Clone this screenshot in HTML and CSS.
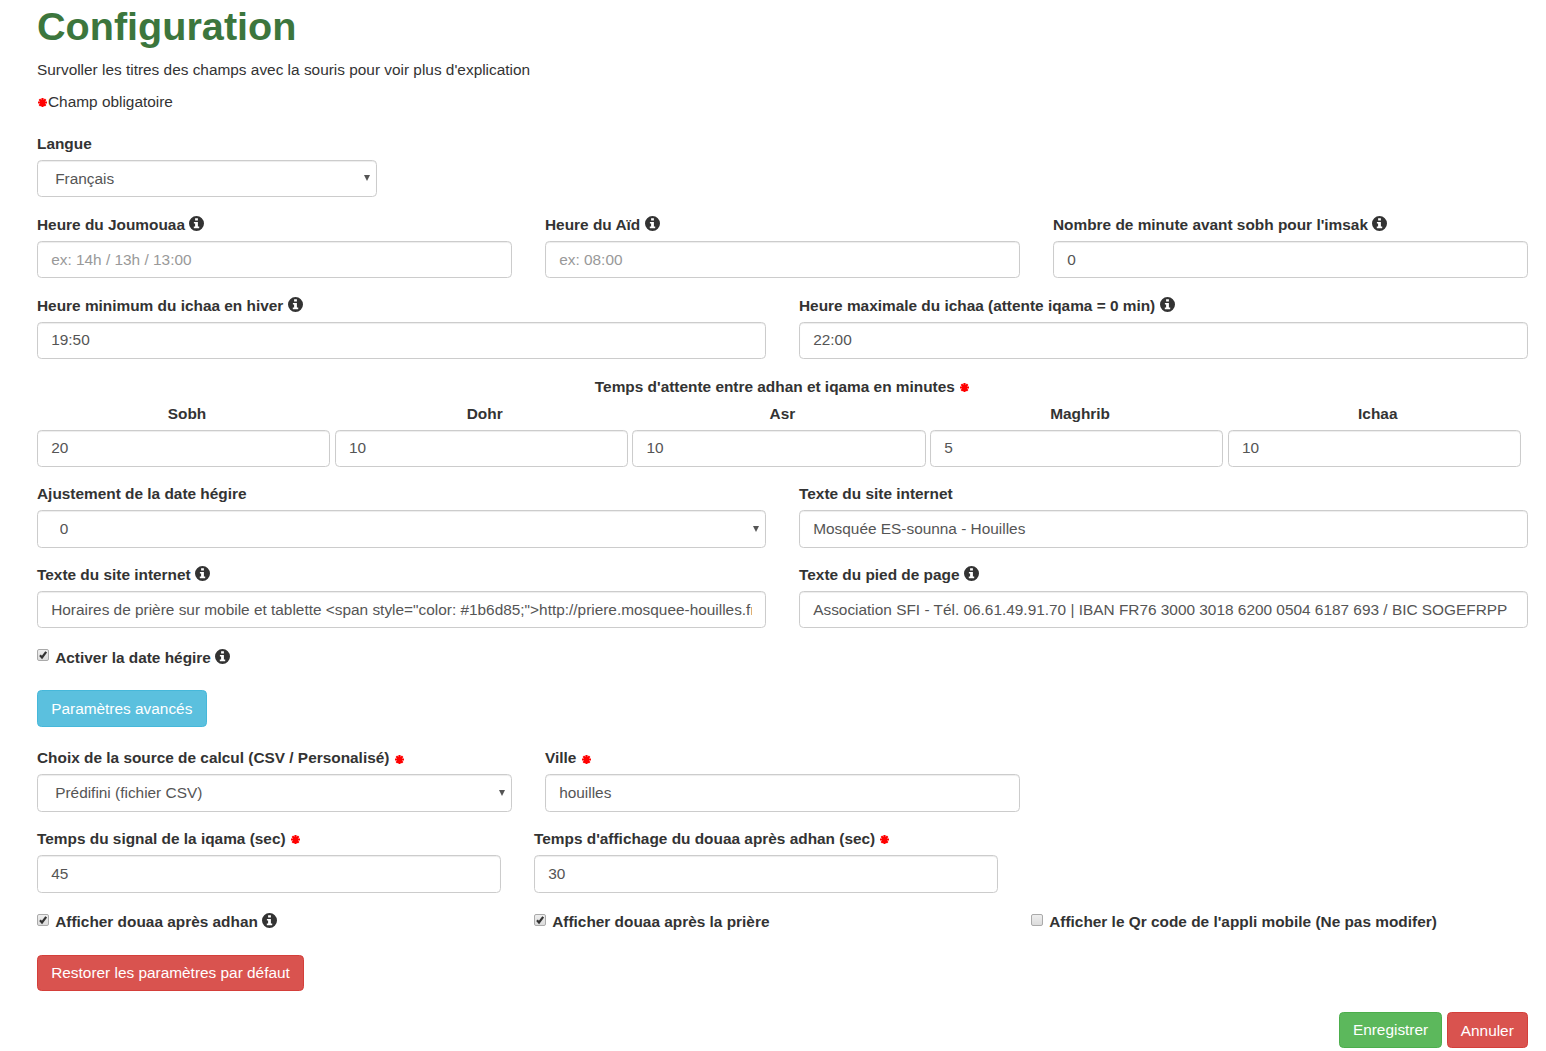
FILE: index.html
```html
<!DOCTYPE html>
<html lang="fr">
<head>
<meta charset="utf-8">
<title>Configuration</title>
<link rel="stylesheet" href="styles.css">
</head>
<body>
<svg class="defs" aria-hidden="true">
  <symbol id="info" viewBox="0 0 15 15">
    <path fill-rule="evenodd" d="M7.5 0a7.5 7.5 0 1 0 0 15a7.5 7.5 0 0 0 0-15zM6.1 2.2h2.8v2.2H6.1zM4.9 6h4v4.6h1.3v1.6H4.8v-1.6h1.3V7.6H4.9z"/>
  </symbol>
  <symbol id="star" viewBox="0 0 20 20">
    <path d="M10 0v20M0 10h20M3 3l14 14M17 3L3 17" stroke="currentColor" stroke-width="4.8"/>
  </symbol>
  <symbol id="arrow" viewBox="0 0 6 6"><path d="M0 0h6L3 6z"/></symbol>
  <symbol id="check" viewBox="0 0 12 12"><path d="M3 6.3l2 2.2 4.2-5.6" fill="none" stroke="#333" stroke-width="2.2"/></symbol>
</svg>
<main class="page">
  <h1>Configuration</h1>
  <p>Survoller les titres des champs avec la souris pour voir plus d'explication</p>
  <p class="legend"><svg class="star"><use href="#star"/></svg>Champ obligatoire</p>

  <form>
    <div class="row language">
      <div class="field">
        <label>Langue</label>
        <div class="select"><select><option>Français</option></select><svg><use href="#arrow"/></svg></div>
      </div>
    </div>

    <div class="row thirds">
      <div class="field"><label>Heure du Joumouaa <svg class="info"><use href="#info"/></svg></label><input type="text" placeholder="ex: 14h / 13h / 13:00"></div>
      <div class="field"><label>Heure du Aïd <svg class="info"><use href="#info"/></svg></label><input type="text" placeholder="ex: 08:00"></div>
      <div class="field"><label>Nombre de minute avant sobh pour l'imsak <svg class="info"><use href="#info"/></svg></label><input type="text" value="0"></div>
    </div>

    <div class="row halves">
      <div class="field"><label>Heure minimum du ichaa en hiver <svg class="info"><use href="#info"/></svg></label><input class="raised" type="text" value="19:50"></div>
      <div class="field"><label>Heure maximale du ichaa (attente iqama = 0 min) <svg class="info"><use href="#info"/></svg></label><input class="raised" type="text" value="22:00"></div>
    </div>

    <div class="waiting">
      <label>Temps d'attente entre adhan et iqama en minutes <svg class="star"><use href="#star"/></svg></label>
      <div class="prayer-names"><label>Sobh</label><label>Dohr</label><label>Asr</label><label>Maghrib</label><label>Ichaa</label></div>
      <div class="prayer-times">
        <input class="raised" type="text" value="20"><input class="raised" type="text" value="10"><input class="raised" type="text" value="10"><input class="raised" type="text" value="5"><input class="raised" type="text" value="10">
      </div>
    </div>

    <div class="row halves tall">
      <div class="field">
        <label>Ajustement de la date hégire</label>
        <div class="select number"><select><option>0</option></select><svg><use href="#arrow"/></svg></div>
      </div>
      <div class="field"><label>Texte du site internet</label><input type="text" value="Mosquée ES-sounna - Houilles"></div>
    </div>

    <div class="row halves">
      <div class="field"><label>Texte du site internet <svg class="info"><use href="#info"/></svg></label><input type="text" value="Horaires de prière sur mobile et tablette &lt;span style=&quot;color: #1b6d85;&quot;&gt;http://priere.mosquee-houilles.fr&lt;/span&gt;"></div>
      <div class="field"><label>Texte du pied de page <svg class="info"><use href="#info"/></svg></label><input type="text" value="Association SFI - Tél. 06.61.49.91.70 | IBAN FR76 3000 3018 6200 0504 6187 693 / BIC SOGEFRPP"></div>
    </div>

    <div class="option hijri">
      <span class="box"><svg><use href="#check"/></svg></span><label>Activer la date hégire <svg class="info"><use href="#info"/></svg></label>
    </div>

    <button type="button" class="btn advanced">Paramètres avancés</button>

    <div class="row thirds tall source">
      <div class="field">
        <label>Choix de la source de calcul (CSV / Personalisé) <svg class="star"><use href="#star"/></svg></label>
        <div class="select"><select><option>Prédifini (fichier CSV)</option></select><svg><use href="#arrow"/></svg></div>
      </div>
      <div class="field"><label>Ville <svg class="star"><use href="#star"/></svg></label><input type="text" value="houilles"></div>
    </div>

    <div class="row nested tall">
      <div class="field"><label>Temps du signal de la iqama (sec) <svg class="star"><use href="#star"/></svg></label><input type="text" value="45"></div>
      <div class="field"><label>Temps d'affichage du douaa après adhan (sec) <svg class="star"><use href="#star"/></svg></label><input type="text" value="30"></div>
    </div>

    <div class="nested options">
      <div class="option"><span class="box"><svg><use href="#check"/></svg></span><label>Afficher douaa après adhan <svg class="info"><use href="#info"/></svg></label></div>
      <div class="option"><span class="box"><svg><use href="#check"/></svg></span><label>Afficher douaa après la prière</label></div>
      <div class="option"><span class="box"></span><label>Afficher le Qr code de l'appli mobile (Ne pas modifer)</label></div>
    </div>

    <button type="button" class="btn danger reset">Restorer les paramètres par défaut</button>

    <div class="actions">
      <button type="button" class="btn success">Enregistrer</button>
      <button type="button" class="btn danger cancel">Annuler</button>
    </div>
  </form>
</main>
</body>
</html>
```
FILE: styles.css
```css
* { box-sizing: border-box; }

body {
  margin: 0;
  background: #fff;
  color: #333;
  font: 15.4px/22px "Liberation Sans", Arial, sans-serif;
}

.defs { display: none; }

.page { padding: 5px 18px 0 37px; }

h1 {
  margin: 0 0 11px;
  color: #3c763d;
  font-size: 39.6px;
  font-weight: bold;
  line-height: 43px;
}

p { margin: 0 0 10px; }
.legend { margin-bottom: 20px; }

label {
  display: block;
  height: 22px;
  margin-bottom: 5px;
  font-weight: bold;
  white-space: nowrap;
}

.info {
  width: 15px;
  height: 15px;
  margin-left: .2px;
  vertical-align: -1px;
  fill: #333;
}

.star {
  width: 9px;
  height: 9px;
  margin: 0 1px;
  color: red;
  vertical-align: 0;
}
.source .star { vertical-align: -1px; }

.row {
  display: grid;
  column-gap: 33px;
  margin-bottom: 17px;
}
.language { grid-template-columns: 340px; }
.thirds { grid-template-columns: repeat(3, 1fr); }
.halves { grid-template-columns: repeat(2, 1fr); }
.nested {
  display: grid;
  grid-template-columns: repeat(3, 464px);
  column-gap: 33px;
}
.field { min-width: 0; }

input, select {
  display: block;
  width: 100%;
  height: 37px;
  margin: 0;
  padding: 0 13.2px;
  border: 1px solid #ccc;
  border-radius: 4.4px;
  background: #fff;
  box-shadow: inset 0 1px 1px rgba(0, 0, 0, .075);
  color: #555;
  font: inherit;
}
input.raised { padding-bottom: 1px; }
input::placeholder { color: #999; opacity: 1; }

.tall { margin-bottom: 16px; }
.tall input, .tall select { height: 38px; }

select {
  appearance: none;
  padding-left: 17.2px;
}
.select { position: relative; }
.select svg {
  position: absolute;
  top: 15px;
  right: 7px;
  width: 6px;
  height: 6px;
  fill: #555;
}
.tall .select svg { top: 16px; }
.number select { padding-left: 21.7px; }

.waiting { margin-bottom: 16px; text-align: center; }
.prayer-names {
  display: grid;
  grid-template-columns: repeat(5, 297.7px);
  margin-left: 1.2px;
}
.prayer-times {
  display: grid;
  grid-template-columns: repeat(5, 293.35px);
  column-gap: 4.35px;
}

.option { display: flex; }
.option label { margin: 0; }
.box {
  width: 12px;
  height: 12px;
  margin: 3px 6.2px 0 0;
  border: 1px solid #aaa;
  border-radius: 2px;
  background: linear-gradient(#eee, #dcdcdc);
}
.box svg {
  display: block;
  width: 12px;
  height: 12px;
  margin: -1px;
}
.hijri { margin: 19px 0 21px; }
.hijri .box { margin-top: 2px; }
.options { margin: 18px 0 22px; }

.btn {
  display: block;
  height: 36px;
  padding: 0 13.2px;
  border: 1px solid;
  border-radius: 4.4px;
  color: #fff;
  font: inherit;
}
.advanced {
  height: 37px;
  margin-bottom: 20px;
  border-color: #46b8da;
  background: #5bc0de;
}
.danger { border-color: #d43f3a; background: #d9534f; }
.success { border-color: #4cae4c; background: #5cb85c; }
.cancel { padding-top: 1px; }

.actions {
  display: flex;
  justify-content: flex-end;
  gap: 4.2px;
  margin-top: 21px;
}
```
